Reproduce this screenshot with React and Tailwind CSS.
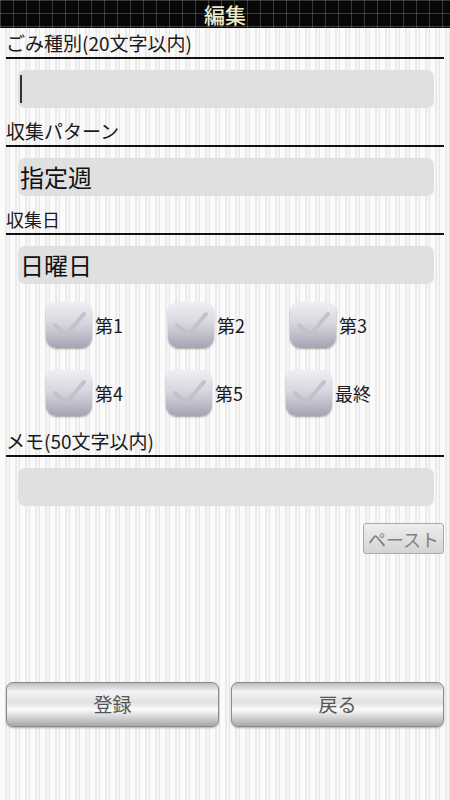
import React from 'react';

const FONT = "font-['Noto_Sans_CJK_JP','Noto_Sans',sans-serif]";

const SectionLabel = ({ children, size = 'text-[19px]' }) => (
  <div className="px-[6px]">
    <div className={`${size} leading-[22px] text-[#1a1a1a] pb-[3px] border-b-2 border-[#111]`}>{children}</div>
  </div>
);

const Field = ({ value, cursor }) => (
  <div className="px-[18px] pt-[11px] pb-[12px] pr-[16px]">
    <div className="h-[38px] rounded-[7px] bg-[#e0e0e0] flex items-center pl-[2px]">
      {cursor && <div className="w-[2px] h-[28px] bg-[#333]" />}
      {value && <span className="text-[24px] text-[#111] leading-none">{value}</span>}
    </div>
  </div>
);

const Check = ({ label, w }) => (
  <div className={`flex items-center gap-[3px] ${w}`}>
    <div className="w-[46px] h-[46px] shrink-0 rounded-[11px] bg-[linear-gradient(180deg,#efeff3_0%,#d8d7e0_45%,#a5a3b3_100%)] shadow-[0_1px_2px_rgba(0,0,0,0.35)] flex items-center justify-center">
      <svg width="36" height="28" viewBox="0 0 36 28">
        <path d="M4 14 L15 24 L33 3" fill="none" stroke="#c3c2cc" strokeWidth="4" strokeLinecap="round" strokeLinejoin="round" />
      </svg>
    </div>
    <span className="text-[18px] text-[#1a1a1a]">{label}</span>
  </div>
);

const BigButton = ({ children }) => (
  <button className="flex-1 h-[45px] rounded-[7px] border border-[#8a8a8a] bg-[linear-gradient(180deg,#bdbdbd_0%,#f4f4f4_20%,#e2e2e2_45%,#fafafa_62%,#a8a8a8_100%)] text-[19px] text-[#555] shadow-[0_1px_2px_rgba(0,0,0,0.3)]">
    {children}
  </button>
);

export default function App() {
  return (
    <div className={`${FONT} w-[450px] h-[800px] overflow-hidden flex flex-col bg-[repeating-linear-gradient(90deg,#fbfbfb_0px,#fbfbfb_5px,#ebebeb_5px,#ebebeb_7px,#f6f6f6_7px,#f6f6f6_9px,#e6e6e6_9px,#e6e6e6_10px)]`}>
      <div className="h-[28px] bg-[#080808] bg-[linear-gradient(90deg,rgba(120,120,120,0.45)_1px,transparent_1px),linear-gradient(180deg,rgba(120,120,120,0.45)_1px,transparent_1px)] bg-[size:13px_13px] flex items-center justify-center">
        <span className="text-[21px] font-medium text-[#ecebc8] leading-none">編集</span>
      </div>

      <div className="pt-[4px]">
        <SectionLabel>ごみ種別(20文字以内)</SectionLabel>
      </div>
      <Field cursor />

      <SectionLabel>収集パターン</SectionLabel>
      <Field value="指定週" />

      <SectionLabel size="text-[18px]">収集日</SectionLabel>
      <Field value="日曜日" />

      <div className="flex flex-col gap-[22px] pt-[6px] pb-[14px]">
        <div className="flex pl-[46px]">
          <Check label="第1" w="w-[122px]" />
          <Check label="第2" w="w-[122px]" />
          <Check label="第3" w="w-[100px]" />
        </div>
        <div className="flex pl-[46px]">
          <Check label="第4" w="w-[120px]" />
          <Check label="第5" w="w-[120px]" />
          <Check label="最終" w="w-[100px]" />
        </div>
      </div>

      <SectionLabel>メモ(50文字以内)</SectionLabel>
      <Field />

      <div className="flex justify-end pr-[6px] pt-[5px]">
        <button className="w-[81px] h-[31px] rounded-[3px] border border-[#aaa] bg-[linear-gradient(180deg,#eeeeee,#d4d4d4)] text-[18px] text-[#808080] leading-none">ペースト</button>
      </div>

      <div className="flex gap-[12px] px-[6px] mt-[128px]">
        <BigButton>登録</BigButton>
        <BigButton>戻る</BigButton>
      </div>
    </div>
  );
}
